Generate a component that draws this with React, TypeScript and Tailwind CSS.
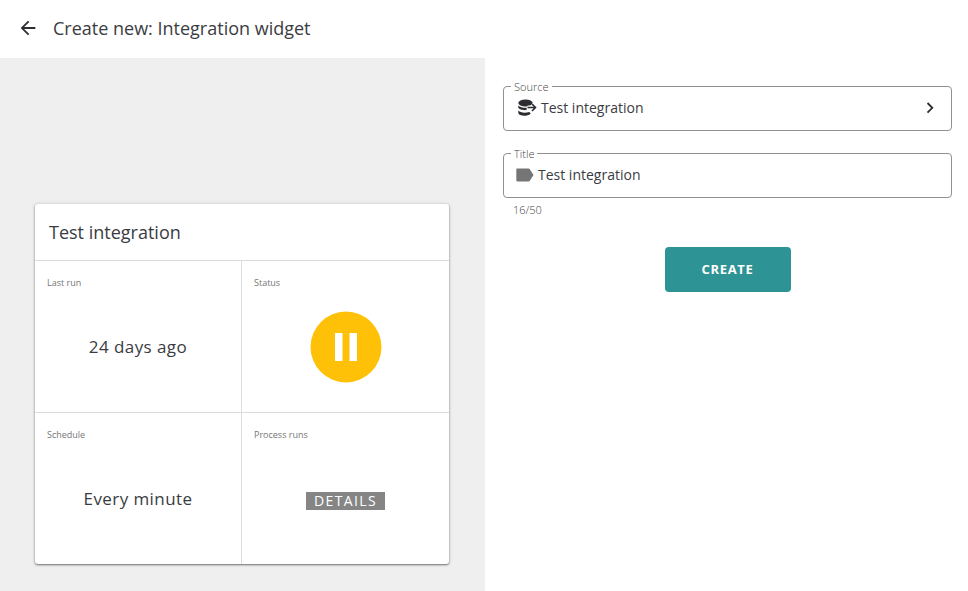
import { useState, type ReactNode } from 'react';

const MAX_TITLE = 50;

function BackIcon() {
  return (
    <svg viewBox="0 0 24 24" className="size-[22px]" fill="currentColor" aria-hidden="true">
      <path d="M20 11H7.800l5.600-5.600L12 4l-8 8 8 8 1.400-1.400L7.800 13H20v-2z" />
    </svg>
  );
}

function SourceIcon() {
  return (
    <svg viewBox="0 0 20 18" className="h-[18px] w-5 shrink-0" aria-hidden="true">
      <ellipse cx="8.500" cy="4" rx="7.200" ry="3.500" fill="#2b2d31" />
      <path d="M1.300 6.400C3 8.300 6 8.900 9.600 8.800v2.300C5.500 11.500 1.700 10.300 1.300 8.600z" fill="#2b2d31" />
      <path d="M1.300 11.600c2.200 2.100 6.200 2.700 11.200 1.400l1.200 1.700C9.500 18 1.700 16.900 1.300 13.900z" fill="#2b2d31" />
      <path d="M10.500 8.500h8M15 5 18.500 8.500 15 12" fill="none" stroke="#ffffff" strokeWidth="4" />
      <path d="M10.500 8.500h8M15 5 18.500 8.500 15 12" fill="none" stroke="#2b2d31" strokeWidth="1.600" />
    </svg>
  );
}

function LabelIcon() {
  return (
    <svg viewBox="0 0 18 14" className="h-3.5 w-[18px] shrink-0" fill="#757575" aria-hidden="true">
      <path d="M1.500.5h11c.6 0 1 .3 1.300.7L17.500 7l-3.700 5.800c-.3.400-.7.700-1.300.7h-11C.8 13.500.3 13 .3 12.300V1.700C.3 1 .8.500 1.500.500z" />
    </svg>
  );
}

function ChevronIcon() {
  return (
    <svg viewBox="0 0 12 12" className="size-3" fill="none" stroke="#2b2d31" strokeWidth="1.800" aria-hidden="true">
      <path d="M3.500 1 8.300 5.800l-4.800 4.800" />
    </svg>
  );
}

function PauseIcon() {
  return (
    <svg viewBox="0 0 72 72" className="size-[72px]" role="img" aria-label="Paused">
      <circle cx="36" cy="36" r="35.500" fill="#ffc107" />
      <path d="M25 22h7.500v28H25zM39.500 22H47v28h-7.500z" fill="#ffffff" />
    </svg>
  );
}

function Cell({ label, className, children }: { label: string; className: string; children: ReactNode }) {
  return (
    <section className={`flex h-[152px] flex-col border-t border-[#dcdcdc] px-3 pt-3.5 pb-2.5 ${className}`}>
      <h3 className="text-[9px] leading-4 text-[#757575]">{label}</h3>
      <div className="flex flex-1 items-center justify-center text-[17px] leading-6 tracking-wide">
        {children}
      </div>
    </section>
  );
}

export default function App() {
  const [title, setTitle] = useState('Test integration');

  return (
    <div className="flex min-h-screen flex-col bg-white font-['Open_Sans','Noto_Sans',sans-serif] text-[#3a3c42]">
      <header className="flex h-[58px] items-center gap-3.5 px-[17px] pb-0.5">
        <button type="button" aria-label="Back" className="text-[#2b2d31]">
          <BackIcon />
        </button>
        <h1 className="text-lg">Create new: Integration widget</h1>
      </header>

      <main className="flex flex-1">
        <div className="flex w-[calc(50%+1px)] items-end bg-[#efefef] pr-9 pb-[27px] pl-[35px]">
          <article className="w-full rounded-[3px] bg-white shadow-[0_1px_2px_rgba(0,0,0,0.5),0_0_4px_rgba(0,0,0,0.12)]">
            <h2 className="flex h-14 items-center px-3.5 text-lg">{title}</h2>
            <div className="grid grid-cols-2">
              <Cell label="Last run" className="border-r">24 days ago</Cell>
              <Cell label="Status" className="">
                <PauseIcon />
              </Cell>
              <Cell label="Schedule" className="border-r">Every minute</Cell>
              <Cell label="Process runs" className="">
                <button type="button" className="mt-1 bg-[#858585] px-2 text-sm leading-[18px] tracking-widest text-white">
                  DETAILS
                </button>
              </Cell>
            </div>
          </article>
        </div>

        <form className="flex flex-1 flex-col pt-7 pr-4 pl-[18px]" onSubmit={(e) => e.preventDefault()}>
          <div className="relative">
            <label htmlFor="source" className="absolute -top-[7px] left-2 bg-white px-[3px] text-[11px] leading-4 font-light text-[#444444]">
              Source
            </label>
            <button
              id="source"
              type="button"
              className="flex h-[45px] w-full items-center gap-1 rounded border border-[#919191] pr-[15px] pb-px pl-[13px] text-left text-sm"
            >
              <SourceIcon />
              <span className="flex-1">Test integration</span>
              <ChevronIcon />
            </button>
          </div>

          <div className="relative mt-[22px]">
            <label htmlFor="title" className="absolute -top-[7px] left-2 bg-white px-[3px] text-[11px] leading-4 font-light text-[#444444]">
              Title
            </label>
            <div className="flex h-[45px] items-center gap-1 rounded border border-[#919191] pr-4 pb-px pl-3">
              <LabelIcon />
              <input
                id="title"
                type="text"
                maxLength={MAX_TITLE}
                value={title}
                onChange={(e) => setTitle(e.target.value)}
                className="min-w-0 flex-1 bg-transparent text-sm outline-none"
              />
            </div>
          </div>
          <p className="mt-1 px-2.5 text-[11px] leading-4 font-light text-[#444444]">
            {title.length}/{MAX_TITLE}
          </p>

          <button
            type="submit"
            className="mt-[29px] h-[45px] w-[126px] self-center rounded bg-[#2d9395] text-[13px] font-bold tracking-wider text-white"
          >
            CREATE
          </button>
        </form>
      </main>
    </div>
  );
}
